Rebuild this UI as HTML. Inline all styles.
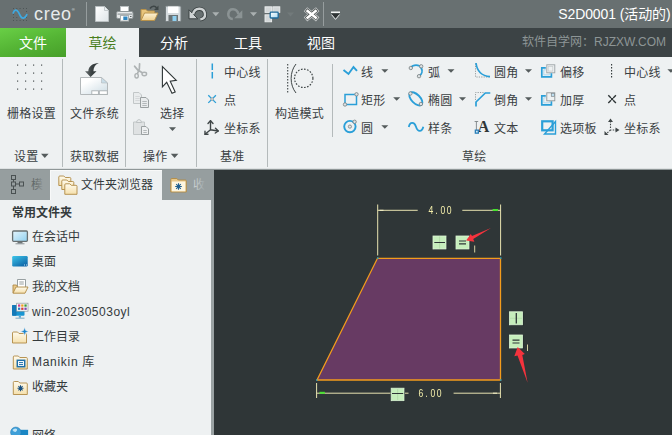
<!DOCTYPE html>
<html><head><meta charset="utf-8">
<style>
html,body{margin:0;padding:0;}
body{width:672px;height:435px;overflow:hidden;position:relative;background:#eef1f2;font-family:"Liberation Sans","Noto Sans CJK SC",sans-serif;font-size:12px;color:#343a3c;}
.abs{position:absolute;}
.t{position:absolute;white-space:nowrap;line-height:16px;height:16px;}
#title{left:0;top:0;width:672px;height:28px;background:#687071;}
#tabs{left:0;top:28px;width:672px;height:29px;background:#3c4345;}
#ribbon{left:0;top:57px;width:672px;height:111px;background:#eef1f2;}
.sep{position:absolute;width:1px;background:#b4babb;top:59px;height:108px;}
.tab{position:absolute;top:28px;height:29px;line-height:30px;font-size:14px;color:#fff;text-align:center;}
.r{letter-spacing:0.25px;color:#3a4042;}
.arr{position:absolute;width:0;height:0;border-left:3.5px solid transparent;border-right:3.5px solid transparent;border-top:4px solid #555c5d;}
</style></head><body>
<div id="title" class="abs"></div>
<div id="tabs" class="abs"></div>
<div id="ribbon" class="abs"></div>

<!-- title bar -->
<div class="t" style="left:34px;top:5px;font-size:18px;line-height:18px;height:18px;color:#e6eaeb;letter-spacing:0.7px;">creo<span style="font-size:4px;position:relative;top:-9px;letter-spacing:0;">®</span></div>
<div class="t" style="right:1.5px;top:6px;font-size:14px;line-height:16px;color:#fff;letter-spacing:-0.1px;">S2D0001 (活动的)</div>


<!-- TITLE ICONS -->
<svg class="abs" style="left:0;top:0;" width="672" height="57" viewBox="0 0 672 57">
<defs>
<linearGradient id="gpage" x1="0" y1="0" x2="1" y2="1"><stop offset="0" stop-color="#ffffff"/><stop offset="1" stop-color="#dfe5e8"/></linearGradient>
<linearGradient id="gfold" x1="0" y1="0" x2="0" y2="1"><stop offset="0" stop-color="#fdf3d6"/><stop offset="1" stop-color="#efd090"/></linearGradient>
<linearGradient id="gblue" x1="0" y1="0" x2="1" y2="1"><stop offset="0" stop-color="#ffffff"/><stop offset="1" stop-color="#a9d8f0"/></linearGradient>
</defs>
<!-- logo dots -->
<g fill="#4d5556">
<rect x="13" y="8" width="1" height="1"/><rect x="16.3" y="8" width="1" height="1"/><rect x="19.6" y="8" width="1" height="1"/><rect x="23" y="8" width="1" height="1"/><rect x="26" y="8" width="1" height="1"/>
<rect x="13" y="11" width="1" height="1"/><rect x="26" y="11" width="1" height="1"/>
<rect x="13" y="14" width="1" height="1"/><rect x="26" y="14" width="1" height="1"/>
<rect x="13" y="17" width="1" height="1"/><rect x="16.3" y="17" width="1" height="1"/><rect x="26" y="17" width="1" height="1"/>
<rect x="13" y="20" width="1" height="1"/><rect x="16.3" y="20" width="1" height="1"/><rect x="19.6" y="20" width="1" height="1"/><rect x="23" y="20" width="1" height="1"/><rect x="26" y="20" width="1" height="1"/>
</g>
<path d="M13.2,13 C14.2,9.5 16.8,9 18.4,12.2 L20.4,16 C22,19.2 25,19 26.8,14.6" fill="none" stroke="#3fa9e1" stroke-width="1.7" stroke-linecap="round"/>
<!-- separators -->
<rect x="86" y="2" width="1" height="24" fill="#969d9e"/>
<rect x="323" y="2" width="1" height="24" fill="#969d9e"/>
<!-- new doc -->
<path d="M95.500,6.500 h9 l4,4 v11 h-13 z" fill="url(#gpage)" stroke="#b9bfc1" stroke-width="1"/>
<path d="M104.500,6.500 v4 h4" fill="#e9eef0" stroke="#b9bfc1" stroke-width="0.800"/>
<!-- printer -->
<rect x="120.500" y="6.500" width="8" height="6.500" fill="#fff" stroke="#b9bfc1"/>
<rect x="116.500" y="11.500" width="16.500" height="7" rx="1.500" fill="#e6e9ea" stroke="#8f9799"/>
<rect x="117.500" y="13.300" width="14.500" height="1.700" fill="#a9b0b2"/>
<rect x="120.500" y="15.500" width="8" height="5.500" fill="#fff" stroke="#a9b0b2"/>
<rect x="123.300" y="16.500" width="4.200" height="3.500" fill="#2f86c0"/>
<rect x="130" y="16" width="1.500" height="1" fill="#5b6364"/>
<!-- open folder -->
<path d="M141,20.500 v-11 h5 l1.500,1.500 h7 v2.500" fill="#e8c57c" stroke="#b8924a"/>
<path d="M141,20.500 l3.500,-7.500 h13.500 l-3.500,7.500 z" fill="url(#gfold)" stroke="#b8924a"/>
<path d="M150,8.500 c2,-3 5.500,-3 6.500,-0.500" fill="none" stroke="#3e4647" stroke-width="1.600"/>
<path d="M158.500,5.500 v4.500 h-4.500 z" fill="#3e4647"/>
<!-- save -->
<rect x="165.500" y="6" width="15.500" height="15.500" rx="1" fill="#d4dadd" stroke="#747c7e"/>
<rect x="168" y="6.500" width="10.500" height="6.500" fill="#fff"/>
<rect x="168.500" y="15" width="9.500" height="6" fill="#6b7375"/>
<rect x="172.500" y="16" width="4" height="5" fill="#8fd0f0"/>
<!-- undo -->
<path d="M193,14.300 c1.500,-7 11,-7.500 12,-0.500 c0.400,3.500 -2,5.500 -4.700,5.500" fill="none" stroke="#3b4243" stroke-width="4.200"/>
<path d="M189,9.800 v9 h8.800 z" fill="#cfd3d4" stroke="#3b4243" stroke-width="1"/>
<path d="M193,14.300 c1.500,-7 11,-7.500 12,-0.500 c0.400,3.500 -2,5.500 -4.700,5.500" fill="none" stroke="#cfd3d4" stroke-width="2.400"/>
<path d="M212.300,12.200 h7 l-3.500,4 z" fill="#aab0b1"/>
<!-- redo -->
<path d="M238.500,14.300 c-1.500,-6.500 -9.500,-7 -10.200,-0.300 c-0.300,3.200 1.800,5 4.500,5" fill="none" stroke="#8b9394" stroke-width="2.600"/>
<path d="M242.300,10.300 v8 h-8 z" fill="#8b9394"/>
<path d="M250,12.200 h7 l-3.500,4 z" fill="#aab0b1"/>
<!-- windows -->
<rect x="265" y="6.800" width="6.600" height="5.600" fill="#d3d7d8" stroke="#eceeef" stroke-width="0.900"/>
<rect x="272.800" y="6.800" width="7" height="5.600" fill="#d3d7d8" stroke="#eceeef" stroke-width="0.900"/>
<rect x="265" y="14.800" width="6.600" height="7" fill="#d3d7d8" stroke="#eceeef" stroke-width="0.900"/>
<rect x="270.200" y="12.200" width="8" height="5.800" rx="0.800" fill="url(#gblue)" stroke="#1f6a9a" stroke-width="1.300"/>
<path d="M287,12.500 h7 l-3.500,4 z" fill="#727a7b"/>
<!-- close x -->
<path d="M307.600,11 l8,6.600 M315.600,11 l-8,6.600" stroke="#c5c9ca" stroke-width="5.400" stroke-linecap="square"/>
<path d="M307.600,11 l8,6.600 M315.600,11 l-8,6.600" stroke="#3d4240" stroke-width="3.800" stroke-linecap="square"/>
<path d="M307.600,11 l8,6.600 M315.600,11 l-8,6.600" stroke="#ffffff" stroke-width="2.600" stroke-linecap="square"/>
<!-- qat arrow -->
<rect x="331" y="11.500" width="9" height="1.500" fill="#f4f6f6"/>
<path d="M331.300,13.500 h8.400 l-4.200,5.200 z" fill="#2f3435"/>
<path d="M331.500,14.600 l4,4.800 l4,-4.800" stroke="#f4f6f6" stroke-width="0.900" fill="none"/>
</svg>

<!-- tabs -->
<div class="tab" style="left:0;width:66px;background:linear-gradient(165deg,#69cf46,#55b535 50%,#479f29);">文件</div>
<div class="tab" style="left:66px;width:73px;background:#eef1f2;color:#4a7f1e;">草绘</div>
<div class="tab" style="left:139px;width:70px;">分析</div>
<div class="tab" style="left:212px;width:72px;">工具</div>
<div class="tab" style="left:285px;width:72px;">视图</div>
<div class="t" style="right:6px;top:34px;font-size:12px;color:#8d9596;">软件自学网：RJZXW.COM</div>

<!-- ribbon separators -->
<div class="sep" style="left:62px"></div>
<div class="sep" style="left:125px"></div>
<div class="sep" style="left:196px"></div>
<div class="sep" style="left:267px"></div>
<div class="sep" style="left:332px;top:64px;height:73px"></div>

<!-- ribbon text -->
<div class="t r" style="left:7px;top:106px;">栅格设置</div>
<div class="t r" style="left:70px;top:106px;">文件系统</div>
<div class="t r" style="left:160px;top:106px;">选择</div>
<div class="t r" style="left:14px;top:149px;">设置</div>
<div class="t r" style="left:70px;top:149px;">获取数据</div>
<div class="t r" style="left:143px;top:149px;">操作</div>
<div class="t r" style="left:220px;top:149px;">基准</div>
<div class="t r" style="left:224px;top:65px;">中心线</div>
<div class="t r" style="left:224px;top:93px;">点</div>
<div class="t r" style="left:224px;top:121px;">坐标系</div>
<div class="t r" style="left:275px;top:106px;">构造模式</div>

<div class="t r" style="left:361px;top:65px;">线</div>
<div class="t r" style="left:361px;top:93px;">矩形</div>
<div class="t r" style="left:361px;top:121px;">圆</div>
<div class="t r" style="left:428px;top:65px;">弧</div>
<div class="t r" style="left:428px;top:93px;">椭圆</div>
<div class="t r" style="left:428px;top:121px;">样条</div>
<div class="t r" style="left:494px;top:65px;">圆角</div>
<div class="t r" style="left:494px;top:93px;">倒角</div>
<div class="t r" style="left:494px;top:121px;">文本</div>
<div class="t r" style="left:560px;top:65px;">偏移</div>
<div class="t r" style="left:560px;top:93px;">加厚</div>
<div class="t r" style="left:560px;top:121px;">选项板</div>
<div class="t r" style="left:624px;top:65px;">中心线</div>
<div class="t r" style="left:624px;top:93px;">点</div>
<div class="t r" style="left:624px;top:121px;">坐标系</div>
<div class="t r" style="left:462px;top:149px;">草绘</div>


<!-- RIBBON ICONS -->
<svg class="abs" style="left:0;top:0;" width="672" height="170" viewBox="0 0 672 170">
<defs>
<linearGradient id="gpage2" x1="0.300" y1="0.200" x2="1" y2="1"><stop offset="0" stop-color="#ffffff"/><stop offset="1" stop-color="#cbdbe3"/></linearGradient>
<linearGradient id="garr" x1="0" y1="0" x2="1" y2="0"><stop offset="0" stop-color="#6a7172"/><stop offset="0.500" stop-color="#3a4142"/><stop offset="1" stop-color="#2f3637"/></linearGradient>
</defs>
<rect x="17" y="64.5" width="1.2" height="1.2" fill="#4a5152"/><rect x="17" y="72.5" width="1.2" height="1.2" fill="#4a5152"/><rect x="17" y="80.5" width="1.2" height="1.2" fill="#4a5152"/><rect x="17" y="88.5" width="1.2" height="1.2" fill="#4a5152"/><rect x="25" y="64.5" width="1.2" height="1.2" fill="#4a5152"/><rect x="25" y="72.5" width="1.2" height="1.2" fill="#4a5152"/><rect x="25" y="80.5" width="1.2" height="1.2" fill="#4a5152"/><rect x="25" y="88.5" width="1.2" height="1.2" fill="#4a5152"/><rect x="33" y="64.5" width="1.2" height="1.2" fill="#4a5152"/><rect x="33" y="72.5" width="1.2" height="1.2" fill="#4a5152"/><rect x="33" y="80.5" width="1.2" height="1.2" fill="#4a5152"/><rect x="33" y="88.5" width="1.2" height="1.2" fill="#4a5152"/><rect x="41" y="64.5" width="1.2" height="1.2" fill="#4a5152"/><rect x="41" y="72.5" width="1.2" height="1.2" fill="#4a5152"/><rect x="41" y="80.5" width="1.2" height="1.2" fill="#4a5152"/><rect x="41" y="88.5" width="1.2" height="1.2" fill="#4a5152"/>
<!-- file system -->
<path d="M80.500,77.500 h21 l6,5.500 v11.500 h-27 z" fill="url(#gpage2)" stroke="#b3b8ba"/>
<path d="M101.500,77.500 v5.500 h6 z" fill="#c8dce7" stroke="#b3b8ba" stroke-width="0.600"/>
<rect x="91.800" y="90.800" width="6.600" height="3.600" fill="#fff" stroke="#a9afb1" stroke-width="0.900"/>
<rect x="99.300" y="90.800" width="8" height="3.600" fill="#fff" stroke="#a9afb1" stroke-width="0.900"/>
<path d="M98.800,63 C93,63.300 88.500,66 88.300,71.300 L85,71.300 L90.600,77 L96.500,71.300 L93.400,71.300 C93.500,67 95.500,64.500 98.800,63 Z" fill="url(#garr)"/>
<!-- scissors -->
<g fill="none" stroke="#adb2b3" stroke-width="1.700" stroke-linecap="round">
<path d="M139.600,63.800 c0.300,3.500 -0.500,7 -2,9.500 M134.600,66.200 c1.800,3 4.500,5 7.300,6.300"/>
<ellipse cx="136.600" cy="75.800" rx="1.700" ry="2.200" stroke-width="1.400"/><ellipse cx="144.300" cy="74" rx="2.300" ry="1.700" stroke-width="1.400"/>
</g>
<!-- copy -->
<path d="M133.500,92.500 h5.500 l2.500,2.500 v8.500 h-8 z" fill="#e9eced" stroke="#c2c7c8" stroke-width="1"/>
<path d="M135.300,96.500 h4.500 M135.300,98.500 h4.500 M135.300,100.500 h4.500" stroke="#cfd3d4" stroke-width="0.800"/>
<path d="M140.500,97.500 h5.500 l2.500,2.500 v7.500 h-8 z" fill="#e9eced" stroke="#9aa0a1" stroke-width="1"/>
<path d="M142.300,101.500 h4.500 M142.300,103.500 h4.500 M142.300,105.500 h4.500" stroke="#a5abac" stroke-width="0.800"/>
<!-- paste -->
<path d="M133.500,122 h11 v12.500 h-11 z" fill="#dfe2e3" stroke="#c2c7c8" stroke-width="1"/>
<path d="M136.500,122.500 q0,-2.500 2.500,-3 q2.500,0.500 2.500,3 z" fill="#e9eced" stroke="#b9bebf" stroke-width="0.900"/>
<path d="M141.500,126.500 h4.500 l2.500,2.500 v5.500 h-7 z" fill="#eef0f1" stroke="#9aa0a1" stroke-width="1"/>
<path d="M143.300,130.500 h3.500 M143.300,132.500 h3.500" stroke="#a5abac" stroke-width="0.800"/>
<!-- cursor -->
<path d="M162.400,66.500 L162.400,86.800 L166.700,82.300 L172,93.300 L175.200,91.900 L170.200,81.200 L176.300,80.300 Z" fill="#fff" stroke="#2f3637" stroke-width="1.100" stroke-linejoin="miter"/>
<path d="M169,127.3 h7 l-3.5,3.600 z" fill="#555c5d"/>
<path d="M170.800,153.800 h7.600 l-3.800,4.300 z" fill="#555c5d"/>
<path d="M41,153.800 h7.600 l-3.800,4.300 z" fill="#555c5d"/>
<!-- centerline blue -->
<path d="M212.300,63.500 v6.500 M212.300,72 v6.500" stroke="#2a9fd8" stroke-width="1.500"/>
<!-- point blue -->
<path d="M208.300,95.300 l7.600,7.600 M215.900,95.300 l-7.600,7.600" stroke="#2a9fd8" stroke-width="1.300"/>
<circle cx="212.100" cy="99.100" r="1.500" fill="#c9ced0" stroke="#8d9597" stroke-width="0.500"/>
<!-- csys -->
<g fill="none" stroke="#3f4647" stroke-width="1.400" stroke-linecap="round" stroke-linejoin="round">
<path d="M210.500,120.800 v9 l7.500,1.200 M210.500,129.800 l-5.500,4.500"/>
<path d="M208,123.500 l2.500,-2.800 l2.500,2.800 M215.500,128.300 l2.800,2.700 l-3,2 M205,131.300 v3 h3"/>
</g>
<!-- construction mode -->
<path d="M287.700,64 v29.500" stroke="#3f4647" stroke-width="1.100" stroke-dasharray="1.500,1.500"/>
<path d="M296,64 c-6.500,8 -6.500,21 0,29" fill="none" stroke="#3f4647" stroke-width="1"/>
<circle cx="303.700" cy="78.300" r="9.200" fill="none" stroke="#3f4647" stroke-width="1.200" stroke-dasharray="1.600,1.500"/>
<!-- line -->
<path d="M343.500,70 l5,4 l5,-7 l3.500,3.800" fill="none" stroke="#2a9fd8" stroke-width="1.900"/>
<path d="M381.3,69.2 h7 l-3.5,3.600 z" fill="#555c5d"/>
<!-- rect -->
<rect x="345" y="94.500" width="11.500" height="10" fill="none" stroke="#2a9fd8" stroke-width="1.500"/>
<circle cx="356.500" cy="94.300" r="1.700" fill="#dfe3e5" stroke="#747c7e" stroke-width="0.800"/>
<circle cx="345" cy="104.500" r="1.700" fill="#dfe3e5" stroke="#747c7e" stroke-width="0.800"/>
<path d="M393.2,97.2 h7 l-3.5,3.600 z" fill="#555c5d"/>
<!-- circle -->
<circle cx="349.900" cy="126.600" r="5.700" fill="none" stroke="#2a9fd8" stroke-width="1.900"/>
<circle cx="349.900" cy="126.600" r="1.600" fill="#dfe3e5" stroke="#747c7e" stroke-width="0.800"/>
<circle cx="354.600" cy="121.800" r="1.700" fill="#dfe3e5" stroke="#747c7e" stroke-width="0.800"/>
<path d="M381.3,125.2 h7 l-3.5,3.600 z" fill="#555c5d"/>
<!-- arc -->
<path d="M411,67.500 c2,-3 8,-3.500 10.300,0.500 c1.500,3 0.500,6.500 -2.300,8.200" fill="none" stroke="#2a9fd8" stroke-width="1.900"/>
<circle cx="410.800" cy="68" r="1.700" fill="#dfe3e5" stroke="#747c7e" stroke-width="0.800"/>
<circle cx="421.200" cy="66.300" r="1.700" fill="#dfe3e5" stroke="#747c7e" stroke-width="0.800"/>
<circle cx="419" cy="76.200" r="1.700" fill="#dfe3e5" stroke="#747c7e" stroke-width="0.800"/>
<path d="M447.5,69.2 h7 l-3.5,3.600 z" fill="#555c5d"/>
<!-- ellipse -->
<ellipse cx="415.800" cy="98.800" rx="8.300" ry="4.300" transform="rotate(45 415.800 98.800)" fill="none" stroke="#2a9fd8" stroke-width="1.900"/>
<circle cx="410.400" cy="93.500" r="1.700" fill="#dfe3e5" stroke="#747c7e" stroke-width="0.800"/>
<circle cx="420.900" cy="104" r="1.700" fill="#dfe3e5" stroke="#747c7e" stroke-width="0.800"/>
<path d="M459,97.2 h7 l-3.5,3.600 z" fill="#555c5d"/>
<!-- spline -->
<path d="M408.800,127 c1,-5.500 5.500,-5.500 7.200,-0.300 c1.700,5.500 6,5.500 7.300,0" fill="none" stroke="#2a9fd8" stroke-width="1.800"/>
<!-- fillet -->
<path d="M475.500,63.500 v13.500 h14.500" fill="none" stroke="#8d9597" stroke-width="0.900" stroke-dasharray="1.200,1.200"/>
<path d="M476,63 c1,8 6,13 14,13.700" fill="none" stroke="#2a9fd8" stroke-width="1.700"/>
<path d="M525,69.2 h7 l-3.5,3.600 z" fill="#555c5d"/>
<!-- chamfer -->
<path d="M475.500,100 v-7.500 h8" fill="none" stroke="#8d9597" stroke-width="0.900" stroke-dasharray="1.200,1.200"/>
<path d="M476,106.500 v-4.500 l9.300,-9 h5" fill="none" stroke="#2a9fd8" stroke-width="1.700"/>
<path d="M525,97.2 h7 l-3.5,3.600 z" fill="#555c5d"/>
<!-- text -->
<path d="M476.400,121.500 v8.500 M474.600,121.500 h3.600" stroke="#7d8587" stroke-width="0.900"/>
<text x="477.800" y="131.700" font-family="Liberation Serif,serif" font-weight="bold" font-size="16" fill="#2f3637">A</text>
<rect x="474.700" y="129.500" width="4.300" height="4.300" fill="#2a7fb8"/>
<rect x="476" y="130.800" width="1.700" height="1.700" fill="#cfe8f7"/>
<!-- offset -->
<rect x="546.800" y="64.800" width="8" height="8" fill="#eef1f2" stroke="#9aa2a4" stroke-width="0.900"/>
<rect x="548.200" y="66.500" width="4.600" height="4.600" fill="none" stroke="#c5cacb" stroke-width="0.700"/>
<path d="M545.800,67.800 h-4 v9 h9.600 v-3.600" fill="none" stroke="#2a9fd8" stroke-width="1.700"/><path d="M545.800,69.800 h-2 v5 h5.600 v-1.600" fill="none" stroke="#9fd4ef" stroke-width="0.800"/>
<!-- thicken -->
<path d="M545.800,95.800 h-4 v9 h9.600 v-3.600" fill="none" stroke="#2a9fd8" stroke-width="1.700"/><path d="M545.800,97.800 h-2 v5 h5.600 v-1.600" fill="none" stroke="#9fd4ef" stroke-width="0.800"/>
<rect x="546.800" y="92.800" width="8" height="8" fill="#eef1f2" stroke="#8d9597" stroke-width="0.900"/>
<rect x="551.300" y="93.300" width="3" height="3" fill="#bfe2f5" stroke="#7d8587" stroke-width="0.700"/>
<!-- palette -->
<rect x="542.200" y="121.300" width="10.400" height="9" fill="none" stroke="#2a9fd8" stroke-width="2.200"/>
<path d="M555.500,121.500 l-11,12.500 h11 z" fill="none" stroke="#2a9fd8" stroke-width="1.400"/>
<!-- centerline black -->
<path d="M611.600,64 v15" stroke="#2f3637" stroke-width="1.100" stroke-dasharray="1.500,1.500"/>
<!-- point black -->
<path d="M608.300,95.300 l2.700,2.700 M613.200,100.200 l2.700,2.700 M615.900,95.300 l-2.700,2.700 M611,100.200 l-2.700,2.700" stroke="#2f3637" stroke-width="1.400"/>
<rect x="611" y="98" width="2.200" height="2.200" fill="#2f3637"/>
<!-- csys dotted -->
<g fill="none" stroke="#3f4647" stroke-width="1.100">
<path d="M610.500,121 v9 h7 M610.500,130 l-5,4.500" stroke-dasharray="1.500,1.300"/>
</g>
<path d="M608,122 l2.500,-3.500 l2.500,3.500 z M615.500,127.500 l4,2.500 l-4,2.500 z M604.500,131 v4 h4 z" fill="#3f4647"/>
<path d="M667.4,69.2 h7 l-3.5,3.600 z" fill="#555c5d"/>
</svg>

<!-- lower area -->
<div class="abs" style="left:0;top:168px;width:672px;height:1px;background:#dde1e2;"></div>
<div class="abs" style="left:0;top:169px;width:672px;height:1px;background:#8f9798;"></div>
<div class="abs" style="left:0;top:170px;width:214px;height:265px;background:#eef1f2;"></div>
<div class="abs" style="left:0;top:170px;width:214px;height:30px;background:#969e9f;"></div>
<div class="abs" style="left:50px;top:170px;width:112px;height:30px;background:#eef1f2;box-shadow:inset 1px 1px 0 #f8f9f9;"></div>
<div class="abs" style="left:211px;top:200px;width:3px;height:235px;background:#9aa2a3;"></div>
<div class="abs" id="canvas" style="left:214px;top:170px;width:458px;height:265px;background:#2f3637;"></div>

<div class="t" style="left:81px;top:177px;">文件夹浏览器</div>
<div class="t" style="left:31px;top:177px;color:#626a6b;">模</div>
<div class="t" style="left:193px;top:177px;color:#c9cecf;">收</div>
<div class="abs" style="left:35px;top:174px;width:12px;height:22px;background:linear-gradient(90deg,rgba(150,158,159,0),rgba(150,158,159,1) 75%);"></div>
<div class="abs" style="left:196px;top:174px;width:12px;height:22px;background:linear-gradient(90deg,rgba(150,158,159,0),rgba(150,158,159,1) 80%);"></div>
<div class="t" style="left:12px;top:205px;font-weight:bold;">常用文件夹</div>
<div class="t" style="left:32px;top:229px;">在会话中</div>
<div class="t" style="left:32px;top:254px;">桌面</div>
<div class="t" style="left:32px;top:279px;">我的文档</div>
<div class="t" style="left:32px;top:304px;letter-spacing:0.5px;">win-20230503oyl</div>
<div class="t" style="left:32px;top:329px;">工作目录</div>
<div class="t" style="left:32px;top:354px;letter-spacing:0.7px;">Manikin 库</div>
<div class="t" style="left:32px;top:379px;">收藏夹</div>
<div class="t" style="left:32px;top:428px;">网络</div>


<!-- PANEL ICONS -->
<svg class="abs" style="left:0;top:168px;" width="214" height="267" viewBox="0 168 214 267">
<defs>
<linearGradient id="gmon" x1="0" y1="0" x2="1" y2="1"><stop offset="0" stop-color="#e4f5fd"/><stop offset="1" stop-color="#8fd0f0"/></linearGradient>
<linearGradient id="gdesk" x1="0" y1="0" x2="0.800" y2="1"><stop offset="0" stop-color="#3cc6ea"/><stop offset="1" stop-color="#0d62a6"/></linearGradient>
<linearGradient id="gf2" x1="0" y1="0" x2="0" y2="1"><stop offset="0" stop-color="#fffbee"/><stop offset="1" stop-color="#f5e0ac"/></linearGradient>
</defs>
<!-- model tree icon -->
<g fill="none" stroke="#4a5152" stroke-width="1">
<rect x="11.500" y="175.500" width="4" height="4"/><rect x="11.500" y="182" width="4" height="4"/><rect x="11.500" y="189.500" width="4" height="4"/><rect x="19.500" y="182" width="4" height="4"/>
<path d="M13.500,179.500 v2.500 M13.500,186 v3.500 M15.500,184 h4.500"/>
</g>
<!-- folder browser icon -->
<g stroke="#b08a45" stroke-width="0.900">
<path d="M58.800,185.500 v-8.500 q0,-1 1,-1 h4 l1.500,1.500 h4.500 q1,0 1,1 v7 z" fill="url(#gf2)"/>
<path d="M61.800,189.500 v-8.500 q0,-1 1,-1 h4 l1.500,1.500 h4.500 q1,0 1,1 v7 z" fill="url(#gf2)"/>
<path d="M64.800,194.300 v-9.500 q0,-1 1,-1 h4 l1.500,1.500 h4.700 q1,0 1,1 v8 z" fill="url(#gf2)"/>
</g>
<!-- favorites tab icon -->
<path d="M170.800,192 v-12.500 q0,-1 1,-1 h5 l1.500,1.500 h7 q1,0 1,1 v11 z" fill="#e9c98a" stroke="#b08a45" stroke-width="0.900"/>
<rect x="171.800" y="181.500" width="13.500" height="9.800" fill="#fdf6e0"/>
<g stroke="#1f5f90" stroke-width="1.100"><path d="M178.500,183.200 v6.600 M175.200,186.500 h6.600 M176.200,184.200 l4.600,4.600 M180.800,184.200 l-4.600,4.600"/></g>
<!-- monitor (in session) -->
<rect x="12.600" y="231" width="14.800" height="10.300" rx="1" fill="url(#gmon)" stroke="#687072" stroke-width="1.300"/>
<rect x="17.500" y="242" width="5" height="1.500" fill="#6d7577"/><rect x="15.500" y="243.300" width="9" height="1" fill="#8d9597"/>
<!-- desktop -->
<rect x="12.200" y="256" width="15.500" height="10.500" rx="1.200" fill="url(#gdesk)"/>
<rect x="24" y="264.500" width="1" height="1" fill="#bfe6f7"/><rect x="26" y="264.500" width="1" height="1" fill="#bfe6f7"/>
<!-- my documents -->
<path d="M17.500,279.500 h8 v8 h-8 z" fill="#fff" stroke="#8d9597" stroke-width="0.900"/>
<path d="M19.300,282 h4.500 M19.300,284 h4.500" stroke="#7d8587" stroke-width="0.800"/>
<path d="M13,293 v-8 h3.500 l1,1.500" fill="#e9c98a" stroke="#b08a45" stroke-width="0.900"/>
<path d="M13,293.200 l3,-6.200 h12 l-3,6.200 z" fill="url(#gf2)" stroke="#b08a45" stroke-width="0.900"/>
<!-- win computer -->
<rect x="12" y="305" width="12.500" height="10.800" rx="1" fill="#1a96d2"/>
<rect x="12" y="305" width="4.500" height="10.800" rx="1" fill="#1479b8"/>
<rect x="18.800" y="315.800" width="2.200" height="2" fill="#5aa9d6"/><rect x="15.500" y="317.600" width="9" height="1.200" fill="#8db4c9"/>
<rect x="16.700" y="303.200" width="11.300" height="8" fill="#fbfcfd" stroke="#8d9597" stroke-width="0.700"/>
<rect x="18" y="304.400" width="2.300" height="2.300" fill="#d03a8c"/><rect x="21.200" y="304.400" width="2.300" height="2.300" fill="#e8a020"/><rect x="24.400" y="304.400" width="2.300" height="2.300" fill="#3a9a3a"/>
<rect x="18" y="307.600" width="2.300" height="2.300" fill="#2a7fc0"/><rect x="21.200" y="307.600" width="2.300" height="2.300" fill="#d03a3a"/><rect x="24.400" y="307.600" width="2.300" height="2.300" fill="#7a4ab0"/>
<!-- working dir -->
<path d="M12.500,343 v-10 q0,-1 1,-1 h4 l1.500,1.500 h6.500 q1,0 1,1 v8.500 z" fill="url(#gf2)" stroke="#b08a45" stroke-width="0.900"/>
<path d="M24.600,327.300 l1.100,3.100 l3.100,1.100 l-3.100,1.100 l-1.100,3.100 l-1.100,-3.100 l-3.100,-1.100 l3.100,-1.100 z" fill="#1f86cc" stroke="#eef1f2" stroke-width="0.600"/>
<!-- manikin -->
<path d="M13.300,369 v-12 q0,-1 1,-1 h4 l1.500,1.500 h6.500 q1,0 1,1 v10.500 z" fill="url(#gf2)" stroke="#b08a45" stroke-width="0.900"/>
<rect x="17.300" y="360.300" width="7.400" height="6.400" fill="#fff" stroke="#1d6fa8" stroke-width="1.500"/>
<path d="M19,362.600 h4 M19,364.600 h4" stroke="#1d6fa8" stroke-width="1"/>
<!-- favorites -->
<path d="M13.300,394.500 v-12 q0,-1 1,-1 h4 l1.500,1.500 h6.500 q1,0 1,1 v10.500 z" fill="url(#gf2)" stroke="#b08a45" stroke-width="0.900"/>
<g stroke="#174f80" stroke-width="1.050"><path d="M20.500,385.200 v6 M17.500,388.200 h6 M18.400,386.100 l4.200,4.200 M22.600,386.100 l-4.200,4.200"/></g>
<!-- network -->
<rect x="19.600" y="429.800" width="8.500" height="6" fill="#1a86c4"/>
<circle cx="15.800" cy="432.300" r="5.200" fill="#3f9fd8" stroke="#2a7fb8" stroke-width="0.600"/>
<path d="M12.500,430 q2,-2.500 4.500,-1 q0.500,2 -1.500,3 q-2,0 -3,-2 z" fill="#bfe3f5"/>
</svg>

<!-- sketch -->
<svg class="abs" style="left:214px;top:170px;will-change:transform;" width="458" height="265" viewBox="214 170 458 265">
<polygon points="377.500,258.300 500.500,258.300 500.500,380 317,380" fill="#673a63"/>
<polyline points="317,380 377.500,258.300 500.500,258.300" fill="none" stroke="#f39c1c" stroke-width="1.300"/>
<polyline points="500.500,258.300 500.500,380 317,380" fill="none" stroke="#f39c1c" stroke-width="1.300"/>
<g stroke="#e8e3b0" stroke-width="1" fill="none">
<path d="M377.700,204.500 v51 M500.600,204.500 v51 M377.700,210.300 h40 M462.300,210.300 h38.300"/>
<path d="M316.600,383 v15 M500.400,383 v15 M316.600,393.200 h74 M404.500,393.200 h4 M453.600,393.200 h46.800"/>
</g>
<rect x="379.500" y="209.800" width="4" height="1" fill="#f3efc8"/>
<rect x="492.600" y="209" width="5.400" height="2" fill="#48e030"/>
<rect x="319.500" y="391.800" width="5.400" height="2" fill="#48e030"/>
<rect x="493" y="392.700" width="4" height="1" fill="#f3efc8"/>
<rect x="377" y="257.300" width="1.500" height="1.500" fill="#2aa0c0"/><rect x="500" y="257.300" width="1.500" height="1.500" fill="#2aa0c0"/>
<rect x="316" y="379.300" width="1.500" height="1.500" fill="#2aa0c0"/><rect x="500" y="379.300" width="1.500" height="1.500" fill="#2aa0c0"/>
<g font-family="Liberation Sans,sans-serif" font-size="11.6" fill="#f6f0ac">
<text transform="translate(428.4,214.2) scale(0.74,1)" x="0.00 9.19 16.49 24.86" y="0">4.00</text>
<text transform="translate(418.4,397.0) scale(0.74,1)" x="0.00 9.19 16.49 24.86" y="0">6.00</text>
</g>
<!-- constraint boxes -->
<g fill="#20262a"><rect x="434" y="237" width="13.200" height="13"/><rect x="457" y="237" width="13.200" height="13"/><rect x="510.500" y="312.800" width="13" height="13"/><rect x="510.500" y="336" width="13" height="13"/><rect x="392.200" y="389.200" width="12.800" height="12.500"/></g>
<g fill="#c6eebc" stroke="#dcf5d5" stroke-width="0.800">
<rect x="433" y="236" width="13" height="13"/><rect x="456" y="236" width="13" height="13"/>
<rect x="509.500" y="311.800" width="13" height="13"/><rect x="509.500" y="335" width="13" height="13"/>
<rect x="391.200" y="388.200" width="12.800" height="12.500"/>
</g>
<g stroke="#2f3637" stroke-width="1.200">
<path d="M439.600,236.500 v12" stroke="#b4dcab" stroke-width="1"/><path d="M434.300,242.500 h10.700" stroke-width="1"/>
<path d="M459,241 h7 M459,243.800 h7"/>
<path d="M510,318.300 h12" stroke="#b4dcab" stroke-width="0.800"/><path d="M516.300,313 v10.500" stroke-width="1.300"/>
<path d="M512.500,340.200 h7 M512.500,343 h7"/>
<path d="M397.700,389 v11" stroke="#b4dcab" stroke-width="1"/><path d="M392,393.500 h11.200" stroke-width="1"/>
</g>
<path d="M474.700,245.500 v7" stroke="#e8e3b0" stroke-width="0.900"/>
<path d="M527.500,344.500 v6.500" stroke="#e8e3b0" stroke-width="0.900"/>
<!-- red arrows -->
<path d="M466.100,240.500 L470.800,234 L472,236 L491,228.100 L473.200,239 L474.400,241.700 z" fill="#f5333d"/>
<path d="M517.700,347.100 L524.800,354 L522.300,355 L527.600,382.800 L517.500,355.500 L514.300,356.300 z" fill="#f5333d"/>
</svg>
</body></html>
